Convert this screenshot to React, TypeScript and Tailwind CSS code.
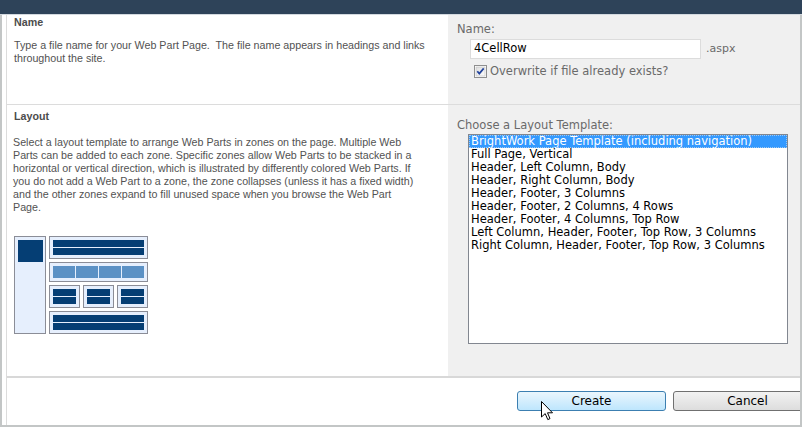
import React from "react";

const templates = [
  "BrightWork Page Template (including navigation)",
  "Full Page, Vertical",
  "Header, Left Column, Body",
  "Header, Right Column, Body",
  "Header, Footer, 3 Columns",
  "Header, Footer, 2 Columns, 4 Rows",
  "Header, Footer, 4 Columns, Top Row",
  "Left Column, Header, Footer, Top Row, 3 Columns",
  "Right Column, Header, Footer, Top Row, 3 Columns",
];

const Bar = ({ className = "" }: { className?: string }) => (
  <div className={`h-[7px] bg-[#053e74] ${className}`} />
);

const Zone = ({ className = "", children }: { className?: string; children: React.ReactNode }) => (
  <div className={`border border-[#8b8d97] bg-[#e6effd] p-[3px] flex flex-col gap-[1px] ${className}`}>
    {children}
  </div>
);

const LayoutPreview = () => (
  <div className="flex gap-[3px] ml-[1px]">
    <div className="w-[32px] h-[98px] border border-[#8b8d97] bg-[#e6effd] p-[3px]">
      <div className="w-[25px] h-[22px] bg-[#053e74]" />
    </div>
    <div className="w-[99px] flex flex-col gap-[3px]">
      <Zone className="h-[23px]">
        <Bar />
        <Bar />
      </Zone>
      <div className="h-[20px] border border-[#8b8d97] bg-[#e6effd] p-[3px] flex gap-[1px]">
        <div className="flex-1 bg-[#5b91c5]" />
        <div className="flex-1 bg-[#5b91c5]" />
        <div className="flex-1 bg-[#5b91c5]" />
        <div className="flex-1 bg-[#5b91c5]" />
      </div>
      <div className="flex gap-[3px]">
        <Zone className="w-[31px] h-[23px]">
          <Bar />
          <Bar />
        </Zone>
        <Zone className="w-[31px] h-[23px]">
          <Bar />
          <Bar />
        </Zone>
        <Zone className="w-[31px] h-[23px]">
          <Bar />
          <Bar />
        </Zone>
      </div>
      <Zone className="h-[23px]">
        <Bar />
        <Bar />
      </Zone>
    </div>
  </div>
);

const CheckBox = () => (
  <svg width="13" height="13" viewBox="0 0 13 13">
    <defs>
      <linearGradient id="cb" x1="0" y1="0" x2="1" y2="1">
        <stop offset="0" stopColor="#dcdcdc" />
        <stop offset="1" stopColor="#ffffff" />
      </linearGradient>
    </defs>
    <rect x="0.5" y="0.5" width="12" height="12" fill="#fff" stroke="#8f8f8f" />
    <rect x="2" y="2" width="9" height="9" fill="url(#cb)" stroke="#c0c0c0" strokeWidth="0.6" />
    <path d="M3.3 6.3 L5.3 8.6 L9.7 3.4" fill="none" stroke="#21429c" strokeWidth="1.7" />
  </svg>
);

const Cursor = () => (
  <svg width="13" height="20" viewBox="0 0 13 20" className="absolute left-[541px] top-[401px]">
    <path
      d="M0.5 0.5 L0.5 16 L4.2 12.6 L6.8 18.6 L9 17.6 L6.5 11.8 L11.5 11.8 Z"
      fill="#fff"
      stroke="#000"
      strokeWidth="1"
      strokeLinejoin="round"
    />
  </svg>
);

export default function App() {
  return (
    <div className="relative w-[802px] h-[427px] flex flex-col bg-white overflow-hidden text-[10.7px] font-['Liberation_Sans',Arial,sans-serif]">
      <div className="h-[15px] shrink-0 bg-[#2e4359] border-b border-[#d3d9df]" />
      <div className="flex-1 flex flex-col border-l-2 border-r-2 border-b-2 border-[#c3c6c6] pl-[4px] min-h-0">
        <div className="flex-1 flex flex-col border-l border-[#dcdcdc] min-h-0">
          {/* Name section */}
          <div className="h-[90px] shrink-0 flex border-b border-[#dcdcdc]">
            <div className="w-[441px] pl-[7px] pt-[1px] text-[#525252]">
              <div className="font-bold text-[#4c4c4c] leading-[13px]">Name</div>
              <p className="mt-[10px] leading-[13px]">
                Type a file name for your Web Part Page.&nbsp; The file name appears in headings and links throughout the site.
              </p>
            </div>
            <div className="flex-1 bg-[#f0f0f0] pl-[9px] pt-[8px] font-['DejaVu_Sans',Verdana,sans-serif] text-[#6a6a6a] text-[11px]">
              <div className="leading-[13px] text-[11.5px]">Name:</div>
              <div className="mt-[3px] ml-[13px] flex items-center">
                <div className="w-[231px] h-[20px] bg-white border border-[#dcdcdc] pl-[3px] flex items-center text-black text-[11.5px]">
                  4CellRow
                </div>
                <span className="ml-[5px]">.aspx</span>
              </div>
              <div className="mt-[6px] ml-[17px] flex items-center gap-[3px]">
                <CheckBox />
                <span className="text-[11.5px] leading-[13px]">Overwrite if file already exists?</span>
              </div>
            </div>
          </div>

          {/* Layout section */}
          <div className="h-[273px] shrink-0 flex border-b-2 border-[#d8d8d8]">
            <div className="w-[441px] pl-[6px] pt-[5px] text-[#525252]">
              <div className="font-bold text-[#4c4c4c] leading-[13px] pl-[1px]">Layout</div>
              <p className="mt-[13px] leading-[13px] pr-[32px]">
                Select a layout template to arrange Web Parts in zones on the page. Multiple Web Parts can be added to each zone. Specific zones allow Web Parts to be stacked in a horizontal or vertical direction, which is illustrated by differently colored Web Parts. If you do not add a Web Part to a zone, the zone collapses (unless it has a fixed width) and the other zones expand to fill unused space when you browse the Web Part Page.
              </p>
              <div className="mt-[22px]">
                <LayoutPreview />
              </div>
            </div>
            <div className="flex-1 bg-[#f0f0f0] pl-[9px] pt-[14px] font-['DejaVu_Sans',Verdana,sans-serif]">
              <div className="leading-[13px] text-[#6a6a6a] text-[11.5px]">Choose a Layout Template:</div>
              <div className="mt-[2px] ml-[11px] w-[320px] h-[210px] bg-white border border-[#828790] text-[11.5px] text-black">
                {templates.map((t, i) => (
                  <div
                    key={t}
                    className={`h-[13px] leading-[13px] pl-[2px] whitespace-nowrap ${
                      i === 0 ? "bg-[#3399ff] text-white outline outline-1 outline-dotted outline-[#a0c8f0] -outline-offset-1" : ""
                    }`}
                  >
                    {t}
                  </div>
                ))}
              </div>
            </div>
          </div>

          {/* Footer */}
          <div className="flex-1 flex gap-[7px] pl-[510px] pt-[13px] overflow-hidden font-['DejaVu_Sans',Verdana,sans-serif] text-[12px]">
            <button className="w-[149px] h-[20px] shrink-0 rounded-[3px] border border-[#3c7fb1] bg-gradient-to-b from-[#eaf6fd] to-[#bee6fd] text-black">
              Create
            </button>
            <button className="w-[149px] h-[20px] shrink-0 rounded-[3px] border border-[#707070] bg-gradient-to-b from-[#f2f2f2] to-[#dddddd] text-black">
              Cancel
            </button>
          </div>
        </div>
      </div>
      <Cursor />
    </div>
  );
}
